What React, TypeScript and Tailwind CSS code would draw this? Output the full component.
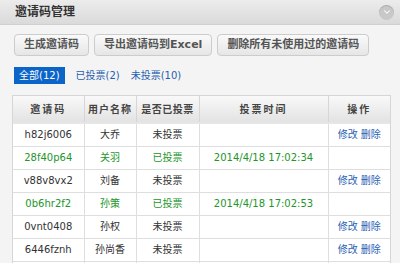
import { ChevronDown } from "lucide-react";

type Row = { code: string; name: string; voted: boolean; time: string };

const rows: Row[] = [
  { code: "h82j6006", name: "大乔", voted: false, time: "" },
  { code: "28f40p64", name: "关羽", voted: true, time: "2014/4/18 17:02:34" },
  { code: "v88v8vx2", name: "刘备", voted: false, time: "" },
  { code: "0b6hr2f2", name: "孙策", voted: true, time: "2014/4/18 17:02:53" },
  { code: "0vnt0408", name: "孙权", voted: false, time: "" },
  { code: "6446fznh", name: "孙尚香", voted: false, time: "" },
  { code: "k2m9a7q1", name: "张飞", voted: false, time: "" },
];

const font = { fontFamily: '"DejaVu Sans", "Noto Sans CJK SC", sans-serif' };

export default function App() {
  return (
    <div className="w-[400px] h-[263px] overflow-hidden bg-[#f4f4f4] text-[10px] text-[#333]" style={font}>
      <div className="flex h-[25px] items-center justify-between border-b border-[#cfcfcf] bg-gradient-to-b from-[#ececec] to-[#dadada] pl-[15px] pr-[6px]">
        <span className="text-[12px] font-bold text-[#333]">邀请码管理</span>
        <span className="flex h-[15px] w-[15px] items-center justify-center rounded-full bg-[#c8c8c8] shadow-[inset_0_1px_1px_rgba(0,0,0,0.15)]">
          <ChevronDown size={10} strokeWidth={2.5} className="text-white" />
        </span>
      </div>

      <div className="flex gap-[5px] px-[14px] pt-[9px]">
        {["生成邀请码", "导出邀请码到Excel", "删除所有未使用过的邀请码"].map((b) => (
          <button
            key={b}
            className="h-[22px] whitespace-nowrap rounded-[4px] border border-[#cccccc] bg-gradient-to-b from-[#fafafa] to-[#e6e6e6] px-[9px] text-[11px] font-bold text-[#555]"
          >
            {b}
          </button>
        ))}
      </div>

      <div className="flex items-center gap-[11px] px-[14px] pt-[11px]">
        <span className="bg-[#0b64c8] px-[5px] leading-[17px] text-white">全部(12)</span>
        <span className="text-[#1f5fb0]">已投票(2)</span>
        <span className="text-[#1f5fb0]">未投票(10)</span>
      </div>

      <div className="mt-[11px] ml-[12px] w-[379px] border border-[#d6d6d6] bg-white">
        <table className="w-full table-fixed border-collapse whitespace-nowrap text-center">
          <thead>
            <tr className="h-[27px] bg-gradient-to-b from-[#f9f9f9] to-[#e2e2e2] font-bold tracking-[2px] text-[#444]">
              <th className="w-[71px] border-r border-b-[2px] border-[#d6d6d6] border-b-[#e6e6e6]">邀请码</th>
              <th className="w-[52px] border-r border-b-[2px] border-[#d6d6d6] border-b-[#e6e6e6] tracking-[1px]">用户名称</th>
              <th className="w-[63px] border-r border-b-[2px] border-[#d6d6d6] border-b-[#e6e6e6] tracking-[0.5px]">是否已投票</th>
              <th className="w-[129px] border-r border-b-[2px] border-[#d6d6d6] border-b-[#e6e6e6]">投票时间</th>
              <th className="border-b-[2px] border-b-[#e6e6e6]">操作</th>
            </tr>
          </thead>
          <tbody>
            {rows.map((r) => (
              <tr key={r.code} className={`h-[23px] border-b border-[#dedede] ${r.voted ? "text-[#23962a]" : "text-[#333]"}`}>
                <td className="border-r border-[#dedede]">{r.code}</td>
                <td className="border-r border-[#dedede]">{r.name}</td>
                <td className="border-r border-[#dedede]">{r.voted ? "已投票" : "未投票"}</td>
                <td className="border-r border-[#dedede]">{r.time}</td>
                <td className="text-[#2a62b4]">{r.voted ? "" : "修改 删除"}</td>
              </tr>
            ))}
          </tbody>
        </table>
      </div>
    </div>
  );
}
